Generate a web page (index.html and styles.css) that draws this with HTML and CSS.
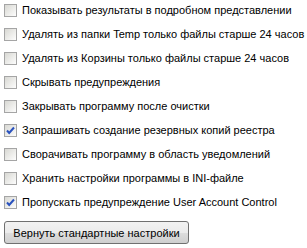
FILE: index.html
```html
<!DOCTYPE html>
<html>
<head>
<meta charset="utf-8">
<link rel="stylesheet" href="styles.css">
</head>
<body>
<div class="panel">
  <div class="opts">
    <label class="opt"><span class="box"></span><span class="txt">Показывать результаты в подробном представлении</span></label>
    <label class="opt"><span class="box"></span><span class="txt">Удалять из папки Temp только файлы старше 24 часов</span></label>
    <label class="opt"><span class="box"></span><span class="txt">Удалять из Корзины только файлы старше 24 часов</span></label>
    <label class="opt"><span class="box"></span><span class="txt">Скрывать предупреждения</span></label>
    <label class="opt"><span class="box"></span><span class="txt">Закрывать программу после очистки</span></label>
    <label class="opt"><span class="box checked"><svg viewBox="0 0 13 13" width="13" height="13"><path d="M3 6.5 L5.2 9 L10 3.5" fill="none" stroke="#2a52be" stroke-width="2"/></svg></span><span class="txt">Запрашивать создание резервных копий реестра</span></label>
    <label class="opt"><span class="box"></span><span class="txt">Сворачивать программу в область уведомлений</span></label>
    <label class="opt"><span class="box"></span><span class="txt">Хранить настройки программы в INI-файле</span></label>
    <label class="opt"><span class="box checked"><svg viewBox="0 0 13 13" width="13" height="13"><path d="M3 6.5 L5.2 9 L10 3.5" fill="none" stroke="#2a52be" stroke-width="2"/></svg></span><span class="txt">Пропускать предупреждение User Account Control</span></label>
  </div>
  <button class="btn">Вернуть стандартные настройки</button>
</div>
</body>
</html>
```
FILE: styles.css
```css
html, body {
  margin: 0;
  padding: 0;
  background: #ffffff;
}
.panel {
  font-family: "Liberation Sans", Arial, sans-serif;
  font-size: 11px;
  color: #000;
  padding: 0 0 0 4px;
}
.opts {
  display: flex;
  flex-direction: column;
  gap: 4px;
}
.opt {
  display: flex;
  align-items: center;
  height: 20px;
  gap: 5px;
}
.box {
  width: 11px;
  height: 11px;
  border: 1px solid #a5a5a5;
  background: linear-gradient(135deg, #d8d8d3 0%, #f2f2f0 70%, #fdfdfd 100%);
  position: relative;
  flex: none;
}
.box svg {
  position: absolute;
  left: -1px;
  top: -1px;
}
.txt {
  white-space: nowrap;
}
.btn {
  display: block;
  margin-top: 9px;
  font-family: "Liberation Sans", Arial, sans-serif;
  font-size: 11px;
  height: 23px;
  width: 185px;
  padding: 0;
  border: 1px solid #707070;
  border-radius: 3px;
  background: linear-gradient(#f2f2f2 0%, #ebebeb 50%, #dddddd 51%, #cfcfcf 100%);
  color: #000;
}
```
